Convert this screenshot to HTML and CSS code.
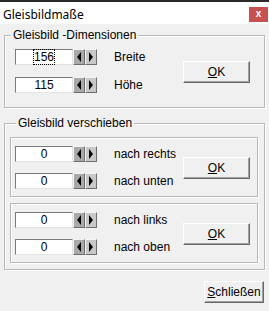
FILE: index.html
```
<!DOCTYPE html>
<html lang="de">
  <head>
    <meta charset="utf-8" />
    <title>Gleisbildmaße</title>
    <link rel="stylesheet" href="styles.css">
  </head>
  <body>
    <div class="window">
      <div class="titlebar">
        <span class="title">Gleisbildmaße</span>
        <span class="close">x</span>
      </div>

      <div class="dlg">
        <fieldset class="group">
          <legend>Gleisbild -Dimensionen</legend>
          <div class="block first">
            <div class="rows">
              <div class="row">
                <div class="edit"><span class="focus">156</span></div>
                <div class="spin"><span class="btn left"><i></i></span><span class="btn right"><i></i></span></div>
                <span class="lbl">Breite</span>
              </div>
              <div class="row">
                <div class="edit">115</div>
                <div class="spin"><span class="btn left"><i></i></span><span class="btn right"><i></i></span></div>
                <span class="lbl">Höhe</span>
              </div>
            </div>
            <button type="button" class="push"><u>O</u>K</button>
          </div>
        </fieldset>

        <fieldset class="group second">
          <legend>Gleisbild verschieben</legend>
          <div class="inner">
            <div class="rows">
              <div class="row">
                <div class="edit">0</div>
                <div class="spin"><span class="btn left"><i></i></span><span class="btn right"><i></i></span></div>
                <span class="lbl">nach rechts</span>
              </div>
              <div class="row">
                <div class="edit">0</div>
                <div class="spin"><span class="btn left"><i></i></span><span class="btn right"><i></i></span></div>
                <span class="lbl">nach unten</span>
              </div>
            </div>
            <button type="button" class="push"><u>O</u>K</button>
          </div>
          <div class="inner">
            <div class="rows">
              <div class="row">
                <div class="edit">0</div>
                <div class="spin"><span class="btn left"><i></i></span><span class="btn right"><i></i></span></div>
                <span class="lbl">nach links</span>
              </div>
              <div class="row">
                <div class="edit">0</div>
                <div class="spin"><span class="btn left"><i></i></span><span class="btn right"><i></i></span></div>
                <span class="lbl">nach oben</span>
              </div>
            </div>
            <button type="button" class="push"><u>O</u>K</button>
          </div>
        </fieldset>

        <div class="footer">
          <button type="button" class="push close-btn"><u>S</u>chließen</button>
        </div>
      </div>
    </div>
  </body>
</html>
```

FILE: styles.css
```
html, body {
  margin: 0;
  padding: 0;
}
body {
  width: 269px;
  height: 311px;
  overflow: hidden;
  background: #f0f0f0;
  font-family: "Liberation Sans", Arial, sans-serif;
  font-size: 11px;
  color: #000;
}
.window {
  height: 311px;
  border-top: 2px solid #2b2b2b;
  box-sizing: border-box;
}
.titlebar {
  height: 22px;
  background: #fff;
  display: flex;
  justify-content: space-between;
}
.title {
  font-family: "Noto Sans", sans-serif;
  font-size: 12px;
  padding: 4px 0 0 3px;
}
.close {
  width: 19px;
  height: 15px;
  margin-top: 5px;
  margin-right: 1px;
  background: #c75050;
  color: #fff;
  font-weight: bold;
  font-size: 10px;
  text-align: center;
  line-height: 14px;
}

.dlg {
  padding-top: 4px;
}
.group {
  margin: 0 4px;
  padding: 0;
  border: 1px solid #b9b9b9;
  box-shadow: inset 1px 1px #fff, 1px 1px #fff;
  min-width: 0;
}
.group legend {
  margin-left: 6px;
  padding: 0 2px;
  font-size: 12px;
  font-family: "Liberation Sans", Arial, sans-serif;
  color: #000;
}
.second {
  margin-top: 8px;
  padding: 7px 6px 6px 5px;
}

.block {
  display: flex;
  align-items: center;
  padding: 7px 0 14px 10px;
}
.inner {
  display: flex;
  align-items: center;
  height: 60px;
  box-sizing: border-box;
  padding: 0 0 0 4px;
  border: 1px solid #b9b9b9;
  box-shadow: inset 1px 1px #fff, 1px 1px #fff;
}
.inner + .inner {
  margin-top: 6px;
}
.rows {
  width: 168px;
  display: flex;
  flex-direction: column;
  gap: 11px;
}
.first .rows {
  gap: 12px;
}
.row {
  display: flex;
  align-items: center;
  height: 16px;
}
.edit {
  width: 58px;
  height: 16px;
  box-sizing: border-box;
  background: #fff;
  border: 1px solid;
  border-color: #7a7a7a #e3e3e3 #e3e3e3 #7a7a7a;
  text-align: center;
  font-size: 12px;
  line-height: 14px;
}
.focus {
  outline: 1px dotted #000;
  outline-offset: 0;
}
.spin {
  display: flex;
  height: 16px;
}
.btn {
  width: 12px;
  height: 16px;
  box-sizing: border-box;
  background: #c8c8c8;
  border: 1px solid;
  border-color: #f4f4f4 #6e6e6e #6e6e6e #f4f4f4;
  display: flex;
  align-items: center;
  justify-content: center;
}
.btn.left {
  background: #a9a9a9;
}
.btn i {
  width: 0;
  height: 0;
  border-top: 5px solid transparent;
  border-bottom: 5px solid transparent;
}
.left i {
  border-right: 4px solid #000;
}
.right i {
  border-left: 4px solid #000;
}
.lbl {
  margin-left: 17px;
  font-size: 12px;
}

.push {
  width: 67px;
  height: 22px;
  padding: 0;
  background: #f0f0f0;
  border: 1px solid;
  border-color: #fff #696969 #696969 #fff;
  box-shadow: inset -1px -1px #a0a0a0;
  font-family: "Liberation Sans", Arial, sans-serif;
  font-size: 12px;
  color: #000;
  margin-top: 2px;
}
.footer {
  display: flex;
  justify-content: flex-end;
  padding: 11px 5px 0 0;
}
.close-btn {
  width: 60px;
  margin-top: 0;
}
```
